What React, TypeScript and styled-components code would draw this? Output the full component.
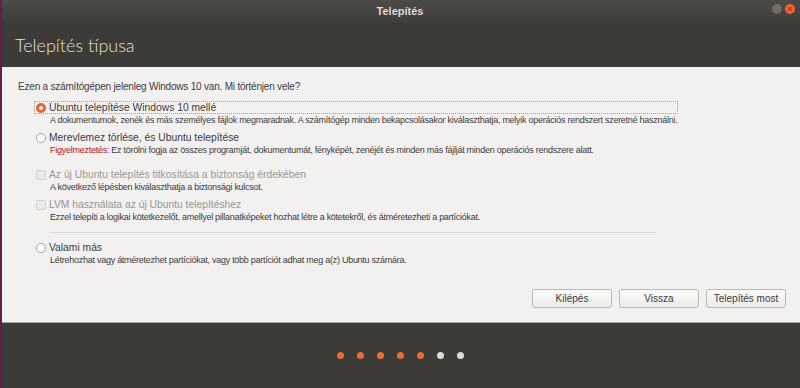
import React from 'react';
import styled, { createGlobalStyle } from 'styled-components';

const GlobalStyle = createGlobalStyle`
  html, body {
    margin: 0;
    padding: 0;
    background: #3c3b37;
  }
  body {
    font-family: 'Liberation Sans', Arial, sans-serif;
  }
`;

type Choice = {
  kind: 'radio' | 'check';
  label: string;
  desc: string;
  warning?: string;
  selected?: boolean;
  disabled?: boolean;
  focused?: boolean;
  gapTop?: number;
};

const CHOICES: Choice[] = [
  {
    kind: 'radio',
    label: 'Ubuntu telepítése Windows 10 mellé',
    desc: 'A dokumentumok, zenék és más személyes fájlok megmaradnak. A számítógép minden bekapcsolásakor kiválaszthatja, melyik operációs rendszert szeretné használni.',
    selected: true,
    focused: true,
  },
  {
    kind: 'radio',
    label: 'Merevlemez törlése, és Ubuntu telepítése',
    warning: 'Figyelmeztetés:',
    desc: ' Ez törölni fogja az összes programját, dokumentumát, fényképét, zenéjét és minden más fájlját minden operációs rendszere alatt.',
  },
  {
    kind: 'check',
    label: 'Az új Ubuntu telepítés titkosítása a biztonság érdekében',
    desc: 'A következő lépésben kiválaszthatja a biztonsági kulcsot.',
    disabled: true,
    gapTop: 7,
  },
  {
    kind: 'check',
    label: 'LVM használata az új Ubuntu telepítéshez',
    desc: 'Ezzel telepíti a logikai kötetkezelőt, amellyel pillanatképeket hozhat létre a kötetekről, és átméretezheti a partíciókat.',
    disabled: true,
  },
];

const OTHER: Choice = {
  kind: 'radio',
  label: 'Valami más',
  desc: 'Létrehozhat vagy átméretezhet partíciókat, vagy több partíciót adhat meg a(z) Ubuntu számára.',
};

const STEPS = [true, true, true, true, true, false, false];

const Indicator = ({ choice }: { choice: Choice }) => {
  if (choice.kind === 'check') return <CheckBox />;
  return <Radio $on={!!choice.selected} />;
};

const Option = ({ choice }: { choice: Choice }) => (
  <OptionBlock $gapTop={choice.gapTop}>
    <LabelRow $focused={!!choice.focused}>
      <Indicator choice={choice} />
      <Label $disabled={!!choice.disabled}>{choice.label}</Label>
    </LabelRow>
    <Desc>
      {choice.warning && <Warning>{choice.warning}</Warning>}
      {choice.desc}
    </Desc>
  </OptionBlock>
);

const App = () => {
  return (
    <>
      <GlobalStyle />
      <Window>
        <TitleBar>
          <span />
          <WindowTitle>Telepítés</WindowTitle>
          <Controls>
            <MinButton />
            <CloseButton>×</CloseButton>
          </Controls>
        </TitleBar>
        <Header>Telepítés típusa</Header>
        <Content>
          <Question>Ezen a számítógépen jelenleg Windows 10 van. Mi történjen vele?</Question>
          <Options>
            {CHOICES.map((c) => (
              <Option key={c.label} choice={c} />
            ))}
            <Separator />
            <Option choice={OTHER} />
          </Options>
          <ButtonRow>
            <Button>Kilépés</Button>
            <Button>Vissza</Button>
            <Button>Telepítés most</Button>
          </ButtonRow>
        </Content>
        <Footer>
          {STEPS.map((done, i) => (
            <Dot key={i} $done={done} />
          ))}
        </Footer>
      </Window>
    </>
  );
};

export default App;

const Window = styled.div`
  width: 800px;
  height: 388px;
  box-sizing: border-box;
  display: flex;
  flex-direction: column;
  border-left: 2px solid #6a1d44;
  background: #3c3b37;
  overflow: hidden;
`;

const TitleBar = styled.div`
  height: 22px;
  display: grid;
  grid-template-columns: 1fr auto 1fr;
  align-items: center;
  background: linear-gradient(#4c4b47, #403f3b);
`;

const WindowTitle = styled.span`
  color: #dfdbd2;
  font-size: 11px;
  font-weight: bold;
  padding-right: 2px;
`;

const Controls = styled.div`
  display: flex;
  justify-content: flex-end;
  align-items: center;
  gap: 3px;
  padding-right: 5px;
  margin-top: -4px;
`;

const MinButton = styled.div`
  width: 10px;
  height: 10px;
  border-radius: 50%;
  background: #6e6d69;
`;

const CloseButton = styled.div`
  width: 10px;
  height: 10px;
  border-radius: 50%;
  background: #ef6330;
  color: #7a2a10;
  font-size: 9px;
  line-height: 10px;
  text-align: center;
`;

const Header = styled.div`
  height: 45px;
  display: flex;
  align-items: center;
  padding-left: 13px;
  color: #e3e0da;
  font-family: Lato, 'Liberation Sans', sans-serif;
  font-weight: 300;
  font-size: 18px;
`;

const Content = styled.div`
  flex: 1;
  display: flex;
  flex-direction: column;
  background: #f2f1f0;
  padding: 12px 14px 14px 16px;
  border-bottom: 1px solid #a8a6a0;
  color: #3c3c3c;
`;

const Question = styled.div`
  font-size: 10px;
  line-height: 16px;
  letter-spacing: -0.2px;
`;

const Options = styled.div`
  display: flex;
  flex-direction: column;
  align-items: flex-start;
  margin-top: 6px;
  padding-left: 16px;
`;

const OptionBlock = styled.div<{ $gapTop?: number }>`
  display: flex;
  flex-direction: column;
  margin-top: ${(p) => p.$gapTop ?? 0}px;
  margin-bottom: 5px;
`;

const LabelRow = styled.div<{ $focused: boolean }>`
  display: flex;
  align-items: center;
  gap: 3px;
  height: 11px;
  padding-left: 1px;
  border: 1px dotted ${(p) => (p.$focused ? '#f0875a' : 'transparent')};
`;

const Radio = styled.div<{ $on: boolean }>`
  box-sizing: border-box;
  width: 10px;
  height: 10px;
  border-radius: 50%;
  border: ${(p) => (p.$on ? '3px solid #e8652f' : '1px solid #a5a39e')};
  background: #fff;
`;

const CheckBox = styled.div`
  box-sizing: border-box;
  width: 10px;
  height: 10px;
  border-radius: 2px;
  border: 1px solid #d3d1cc;
  background: #ebeae8;
`;

const Label = styled.span<{ $disabled: boolean }>`
  font-size: 10.3px;
  line-height: 11px;
  color: ${(p) => (p.$disabled ? '#9a9893' : '#3c3c3c')};
`;

const Desc = styled.div`
  font-size: 9px;
  line-height: 12px;
  letter-spacing: -0.26px;
  padding-left: 16px;
  color: #3c3c3c;
`;

const Warning = styled.span`
  color: #b3151b;
`;

const Separator = styled.div`
  width: 606px;
  margin: 4px 0 8px 16px;
  border-top: 1px solid #dcdad6;
`;

const ButtonRow = styled.div`
  margin-top: auto;
  display: flex;
  justify-content: flex-end;
  gap: 7px;
`;

const Button = styled.button`
  width: 80px;
  height: 19px;
  padding: 0;
  border: 1px solid #bcb9b3;
  border-radius: 3px;
  background: linear-gradient(#fbfbfa, #ecebe9);
  color: #3c3c3c;
  font-family: 'Liberation Sans', Arial, sans-serif;
  font-size: 10px;
`;

const Footer = styled.div`
  height: 65px;
  display: flex;
  justify-content: center;
  align-items: center;
  gap: 13px;
  padding-right: 2px;
`;

const Dot = styled.div<{ $done: boolean }>`
  width: 7px;
  height: 7px;
  border-radius: 50%;
  background: ${(p) => (p.$done ? '#ea6d38' : '#dddbd7')};
`;
